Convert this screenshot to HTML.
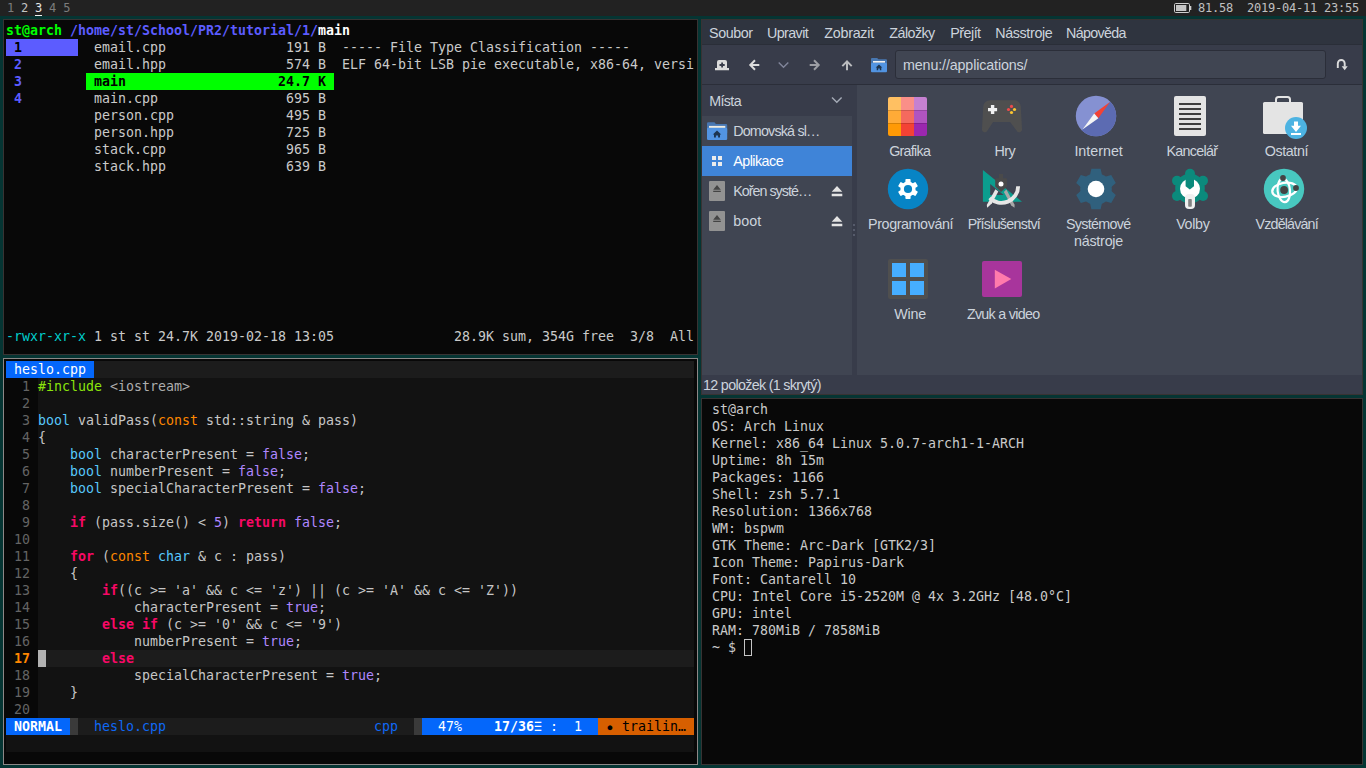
<!DOCTYPE html>
<html lang="cs"><head><meta charset="utf-8"><title>bspwm desktop</title>
<style>
html,body{margin:0;padding:0}
body{width:1366px;height:768px;overflow:hidden;background:#053533;position:relative;
 font-family:"DejaVu Sans Mono","Liberation Mono",monospace}
#bar{position:absolute;left:0;top:0;width:1366px;height:16px;background:#222222}
.bt{position:absolute;height:16px;line-height:16px;font-size:12px;letter-spacing:-0.224px;white-space:pre;color:#c0c0c0}
.d1{color:#7c7c7c}.d2{color:#c4c4c4}.d3{color:#e6e6e6}
.ab{position:absolute;display:block}
.bx{position:absolute;box-sizing:border-box}
.win{position:absolute;box-sizing:border-box;border:1px solid #383333;background:#080808}
.win.foc{border-color:#8c8787}
.ln{position:absolute;height:17px;line-height:17px;font-size:13.288px;letter-spacing:0.0133px;white-space:pre;color:#cacaca}
.ln.v{color:#c6c6c6}
.b{font-weight:bold}
.g{color:#00ff00}.bl{color:#5c5cff}.w{color:#ffffff}.k{color:#000000}.cy{color:#00cdcd}
.lnr{color:#646464}.cur{color:#ff8700}
.kw{color:#f70866}.ty{color:#58c8fc}.co{color:#ff8700}.nu{color:#af87ff}.inc{color:#8ae40c}.st{color:#adadad}
.sb{color:#0f68f5}
/* file manager */
#fm{position:absolute;left:701px;top:19px;width:662px;height:376px;box-sizing:border-box;border:1px solid #383333;background:#404552;overflow:hidden;
 font-family:"Liberation Sans","DejaVu Sans",sans-serif;font-size:14.3px;color:#ccd3dc}
#fm .a{position:absolute}
#fm .t{position:absolute;white-space:pre;line-height:17px;height:17px}
#fm .c{text-align:center}
.tri{display:inline-block;width:12px;margin-right:-4px;transform:scaleX(.68);transform-origin:0 50%}
.dot{display:inline-block;width:8px;transform:translateY(1px) scale(.6);transform-origin:50% 50%}
</style></head>
<body>
<div id="bar"></div>
<div class="bt" style="left:0;top:0"> <span class="d1">1</span> <span class="d2">2</span> <span class="d3">3</span> <span class="d1">4</span> <span class="d1">5</span></div>
<div class="bx" style="left:35px;top:15px;width:7px;height:1px;background:#f0f0f0"></div>
<svg class="ab" style="left:1173px;top:2px" width="20" height="12" viewBox="0 0 20 12"><rect x="1.5" y="1.5" width="15" height="9" rx="1.2" fill="none" stroke="#cfcfcf" stroke-width="1"/><rect x="17" y="4" width="1.3" height="4" fill="#cfcfcf"/><rect x="3" y="3" width="10.3" height="6" fill="#c4c4c4"/></svg>
<div class="bt" style="left:1198px;top:0">81.58  2019-04-11 23:55</div>
<div class="win" id="w1" style="left:3px;top:19px;width:695px;height:336px"></div>
<div class="win foc" id="w2" style="left:3px;top:358px;width:695px;height:407px"></div>
<div class="win" id="w4" style="left:701px;top:398px;width:662px;height:367px"></div>
<div id="ranger">
<div class="bx" style="left:6px;top:39px;width:72px;height:17px;background:#5c5cff"></div><div class="bx" style="left:86px;top:73px;width:248px;height:17px;background:#00ff00"></div>
<div class="ln" style="left:6px;top:22px"><span class="b g">st@arch</span><span class="b bl"> /home/st/School/PR2/tutorial/1/</span><span class="b w">main</span></div>
<div class="ln" style="left:6px;top:39px"><span class="b k"> 1        </span> email.cpp               191 B  ----- File Type Classification -----</div>
<div class="ln" style="left:6px;top:56px"><span class="b bl"> 2        </span> email.hpp               574 B  ELF 64-bit LSB pie executable, x86-64, versi</div>
<div class="ln" style="left:6px;top:73px"><span class="b bl"> 3        </span><span class="b k"> main                   24.7 K </span></div>
<div class="ln" style="left:6px;top:90px"><span class="b bl"> 4        </span> main.cpp                695 B </div>
<div class="ln" style="left:6px;top:107px">           person.cpp              495 B </div>
<div class="ln" style="left:6px;top:124px">           person.hpp              725 B </div>
<div class="ln" style="left:6px;top:141px">           stack.cpp               965 B </div>
<div class="ln" style="left:6px;top:158px">           stack.hpp               639 B </div>
<div class="ln" style="left:6px;top:328px"><span class="cy">-rwxr-xr-x</span> 1 st st 24.7K 2019-02-18 13:05               28.9K sum, 354G free  3/8  All</div>
</div>
<div id="vim">
<div class="bx" style="left:6px;top:361px;width:688px;height:17px;background:#1c1c1c"></div><div class="bx" style="left:6px;top:361px;width:88px;height:17px;background:#0467fb"></div><div class="bx" style="left:38px;top:378px;width:656px;height:340px;background:#121212"></div><div class="bx" style="left:46px;top:650px;width:648px;height:17px;background:#1c1c1c"></div><div class="bx" style="left:38px;top:650px;width:8px;height:17px;background:#b2b2b2"></div><div class="bx" style="left:6px;top:718px;width:688px;height:17px;background:#1c1c1c"></div><div class="bx" style="left:6px;top:718px;width:64px;height:17px;background:#0467fb"></div><div class="bx" style="left:70px;top:718px;width:8px;height:17px;background:#3a3a3a"></div><div class="bx" style="left:414px;top:718px;width:8px;height:17px;background:#3a3a3a"></div><div class="bx" style="left:422px;top:718px;width:176px;height:17px;background:#0467fb"></div><div class="bx" style="left:598px;top:718px;width:96px;height:17px;background:#d75f00"></div><div class="bx" style="left:6px;top:735px;width:688px;height:17px;background:#121212"></div>
<div class="ln" style="left:6px;top:361px"><span class="w"> heslo.cpp </span></div>
<div class="ln v" style="left:6px;top:378px"><span class="lnr">  1 </span><span class="inc">#include</span><span class="st"> &lt;iostream&gt;</span></div>
<div class="ln v" style="left:6px;top:395px"><span class="lnr">  2 </span></div>
<div class="ln v" style="left:6px;top:412px"><span class="lnr">  3 </span><span class="ty">bool</span> validPass(<span class="co">const</span> std::string &amp; pass)</div>
<div class="ln v" style="left:6px;top:429px"><span class="lnr">  4 </span>{</div>
<div class="ln v" style="left:6px;top:446px"><span class="lnr">  5 </span>    <span class="ty">bool</span> characterPresent = <span class="nu">false</span>;</div>
<div class="ln v" style="left:6px;top:463px"><span class="lnr">  6 </span>    <span class="ty">bool</span> numberPresent = <span class="nu">false</span>;</div>
<div class="ln v" style="left:6px;top:480px"><span class="lnr">  7 </span>    <span class="ty">bool</span> specialCharacterPresent = <span class="nu">false</span>;</div>
<div class="ln v" style="left:6px;top:497px"><span class="lnr">  8 </span></div>
<div class="ln v" style="left:6px;top:514px"><span class="lnr">  9 </span>    <span class="b kw">if</span> (pass.size() &lt; <span class="nu">5</span>) <span class="b kw">return</span> <span class="nu">false</span>;</div>
<div class="ln v" style="left:6px;top:531px"><span class="lnr"> 10 </span></div>
<div class="ln v" style="left:6px;top:548px"><span class="lnr"> 11 </span>    <span class="b kw">for</span> (<span class="co">const</span> <span class="ty">char</span> &amp; c : pass)</div>
<div class="ln v" style="left:6px;top:565px"><span class="lnr"> 12 </span>    {</div>
<div class="ln v" style="left:6px;top:582px"><span class="lnr"> 13 </span>        <span class="b kw">if</span>((c &gt;= 'a' &amp;&amp; c &lt;= 'z') || (c &gt;= 'A' &amp;&amp; c &lt;= 'Z'))</div>
<div class="ln v" style="left:6px;top:599px"><span class="lnr"> 14 </span>            characterPresent = <span class="nu">true</span>;</div>
<div class="ln v" style="left:6px;top:616px"><span class="lnr"> 15 </span>        <span class="b kw">else if</span> (c &gt;= '0' &amp;&amp; c &lt;= '9')</div>
<div class="ln v" style="left:6px;top:633px"><span class="lnr"> 16 </span>            numberPresent = <span class="nu">true</span>;</div>
<div class="ln v" style="left:6px;top:650px"><span class="b cur"> 17 </span>        <span class="b kw">else</span></div>
<div class="ln v" style="left:6px;top:667px"><span class="lnr"> 18 </span>            specialCharacterPresent = <span class="nu">true</span>;</div>
<div class="ln v" style="left:6px;top:684px"><span class="lnr"> 19 </span>    }</div>
<div class="ln v" style="left:6px;top:701px"><span class="lnr"> 20 </span></div>
<div class="ln" style="left:6px;top:718px"><span class="b w"> NORMAL </span> <span class="sb">  heslo.cpp</span>                          <span class="sb">cpp</span>   <span class="w">  47%    </span><span class="b w">17/36</span><span class="w tri">☰</span><span class="w"> :  1  </span><span class="k"> </span><span class="k dot">●</span><span class="k"> trailin… </span></div>
</div>
<div id="term">
<div class="ln" style="left:704px;top:401px"> st@arch</div>
<div class="ln" style="left:704px;top:418px"> OS: Arch Linux</div>
<div class="ln" style="left:704px;top:435px"> Kernel: x86_64 Linux 5.0.7-arch1-1-ARCH</div>
<div class="ln" style="left:704px;top:452px"> Uptime: 8h 15m</div>
<div class="ln" style="left:704px;top:469px"> Packages: 1166</div>
<div class="ln" style="left:704px;top:486px"> Shell: zsh 5.7.1</div>
<div class="ln" style="left:704px;top:503px"> Resolution: 1366x768</div>
<div class="ln" style="left:704px;top:520px"> WM: bspwm</div>
<div class="ln" style="left:704px;top:537px"> GTK Theme: Arc-Dark [GTK2/3]</div>
<div class="ln" style="left:704px;top:554px"> Icon Theme: Papirus-Dark</div>
<div class="ln" style="left:704px;top:571px"> Font: Cantarell 10</div>
<div class="ln" style="left:704px;top:588px"> CPU: Intel Core i5-2520M @ 4x 3.2GHz [48.0°C]</div>
<div class="ln" style="left:704px;top:605px"> GPU: intel</div>
<div class="ln" style="left:704px;top:622px"> RAM: 780MiB / 7858MiB</div>
<div class="ln" style="left:704px;top:639px"> ~ $ </div>
<div class="bx" style="left:744px;top:639px;width:8px;height:17px;border:1px solid #c6c6c6"></div>
</div>
<div id="fm">
<!-- menubar -->
<div class="a" style="left:0;top:0;width:660px;height:24px;background:#2f343f"></div>
<div class="a" style="left:0;top:24px;width:660px;height:1px;background:#2a2e38"></div>
<!-- toolbar -->
<div class="a" style="left:0;top:25px;width:660px;height:39px;background:#383c4a"></div>
<div class="a" style="left:0;top:64px;width:660px;height:1px;background:#2b2e39"></div>
<div class="a" style="left:193px;top:30px;width:431px;height:29px;box-sizing:border-box;border:1px solid #2b2e39;border-radius:3px;background:#404552"></div>
<!-- sidebar -->
<div class="a" style="left:0;top:65px;width:155px;height:290px;background:#383c4a"></div>
<div class="a" style="left:0;top:96px;width:150px;height:259px;background:#404552"></div>
<div class="a" style="left:0;top:126px;width:150px;height:30px;background:#3f84d8"></div>
<!-- statusbar -->
<div class="a" style="left:0;top:355px;width:660px;height:19px;background:#383c4a"></div>
<!-- labels -->
<div class="t" style="top:5px;letter-spacing:-0.400px;left:7.0px;">Soubor</div>
<div class="t" style="top:5px;letter-spacing:-0.600px;left:65.0px;">Upravit</div>
<div class="t" style="top:5px;letter-spacing:-0.257px;left:122.3px;">Zobrazit</div>
<div class="t" style="top:5px;letter-spacing:-0.550px;left:187.3px;">Záložky</div>
<div class="t" style="top:5px;letter-spacing:-0.520px;left:248.3px;">Přejít</div>
<div class="t" style="top:5px;letter-spacing:-0.350px;left:293.2px;">Násstroje</div>
<div class="t" style="top:5px;letter-spacing:-0.700px;left:364.1px;">Nápověda</div>
<div class="t" style="top:37px;letter-spacing:-0.137px;left:201.0px;">menu://applications/</div>
<div class="t" style="top:73px;letter-spacing:-0.625px;left:7.2px;">Místa</div>
<div class="t" style="top:103px;letter-spacing:-0.809px;left:31.2px;">Domovská sl…</div>
<div class="t" style="top:133px;letter-spacing:-0.514px;left:31.2px;color:#ffffff">Aplikace</div>
<div class="t" style="top:163px;letter-spacing:-0.982px;left:31.2px;">Kořen systé…</div>
<div class="t" style="top:193px;letter-spacing:0.067px;left:31.3px;">boot</div>
<div class="t" style="top:357px;letter-spacing:-0.675px;left:1.0px;">12 položek (1 skrytý)</div>
<div class="t c" style="top:123px;letter-spacing:-0.708px;left:137.7px;width:140px;">Grafika</div>
<div class="t c" style="top:123px;letter-spacing:-0.550px;left:232.9px;width:140px;">Hry</div>
<div class="t c" style="top:123px;letter-spacing:-0.014px;left:326.6px;width:140px;">Internet</div>
<div class="t c" style="top:123px;letter-spacing:-0.686px;left:419.9px;width:140px;">Kancelář</div>
<div class="t c" style="top:123px;letter-spacing:-0.375px;left:514.4px;width:140px;">Ostatní</div>
<div class="t c" style="top:196px;letter-spacing:-0.400px;left:138.6px;width:140px;">Programování</div>
<div class="t c" style="top:196px;letter-spacing:-0.725px;left:231.9px;width:140px;">Příslušenství</div>
<div class="t c" style="top:196px;letter-spacing:-0.688px;left:326.2px;width:140px;">Systémové</div>
<div class="t c" style="top:213px;letter-spacing:-0.214px;left:326.5px;width:140px;">nástroje</div>
<div class="t c" style="top:196px;letter-spacing:-0.300px;left:420.9px;width:140px;">Volby</div>
<div class="t c" style="top:196px;letter-spacing:-0.844px;left:514.7px;width:140px;">Vzdělávání</div>
<div class="t c" style="top:286px;letter-spacing:-0.267px;left:138.1px;width:140px;">Wine</div>
<div class="t c" style="top:286px;letter-spacing:-0.709px;left:231.2px;width:140px;">Zvuk a video</div>
<!-- all icons: coordinates are absolute screen px, shifted into the window -->
<svg class="a" style="left:0;top:0" width="660" height="374" viewBox="702 20 660 374">
<defs>
<clipPath id="cg"><rect x="888" y="97" width="39" height="39" rx="2"/></clipPath>
<clipPath id="ci"><circle cx="1096" cy="116" r="20.2"/></clipPath>
</defs>
<!-- toolbar icons -->
<g fill="#dcdcdc">
 <path d="M717 68V62a2 2 0 0 1 2-2h6a2 2 0 0 1 2 2v6h2v2.3h-14V68z"/>
 <path d="M721.2 62.4h1.8v1.7h1.7v1.8h-1.7v1.7h-1.8v-1.7h-1.7v-1.8h1.7z" fill="#383c4a"/>
 <path d="M754.3 59.6l1.4 1.4-3 3H759.3v2H752.7l3 3-1.4 1.4-5.4-5.4z"/>
 <path d="M779.2 61.9l4.3 4.4 4.3-4.4 1 1-5.3 5.4-5.3-5.4z" fill="#80859a"/>
 <path d="M814.7 59.6l-1.4 1.4 3 3H809.7v2H816.3l-3 3 1.4 1.4 5.4-5.4z" opacity="0.62"/>
 <path d="M841.6 65.4l1.4 1.4 3-3V70.3h2V63.8l3 3 1.4-1.4-5.4-5.4z" opacity="0.8"/>
 <path d="M1337.8 68V63.4A3.45 3.45 0 0 1 1344.7 63.4V66.6" fill="none" stroke="#dcdcdc" stroke-width="1.9"/><path d="M1341.7 66.2h6l-3 4z"/>
</g>
<!-- home folder (toolbar) -->
<g>
 <path d="M871 59a1 1 0 0 1 1-1h5.2l1.2 1.3H886a1 1 0 0 1 1 1V66h-16z" fill="#4877b1"/>
 <rect x="873" y="61" width="12" height="1.6" fill="#f2f2f2"/>
 <rect x="871" y="63" width="16" height="9.2" rx="1" fill="#5294e2"/>
 <path d="M879 64.6l3.3 3h-1v2.6h-1.5v-1.7h-1.6v1.7h-1.5v-2.6h-1z" fill="#1d344f"/>
</g>
<!-- sidebar icons -->
<path d="M832.5 96.9l4.3 4.4 4.3-4.4 1 1-5.3 5.4-5.3-5.4z" fill="#a4aab6"/>
<g>
 <path d="M707 123.5a1.2 1.2 0 0 1 1.2-1.2h6.2l1.5 1.6H726a1.2 1.2 0 0 1 1.2 1.2V133h-20.2z" fill="#4877b1"/>
 <rect x="709" y="125.9" width="16.3" height="2.4" fill="#f1ecdf"/>
 <rect x="707" y="127.8" width="20.2" height="12.1" rx="1.2" fill="#5294e2"/>
 <path d="M717 130.6l4.2 3.8h-1.2v3.2h-1.9v-2.1h-2.2v2.1h-1.9v-3.2h-1.2z" fill="#1d344f"/>
</g>
<g fill="#ececec">
 <rect x="712" y="156" width="4" height="4"/><rect x="718" y="156" width="4" height="4"/>
 <rect x="712" y="162" width="4" height="4"/><rect x="718" y="162" width="4" height="4"/>
</g>
<g>
 <rect x="709" y="181" width="16" height="20" rx="1" fill="#929292"/>
 <path d="M717 185.1l3.8 4.6h-7.6zM713.2 190.8h7.6v1.2h-7.6z" fill="#444444"/>
 <rect x="709" y="211" width="16" height="20" rx="1" fill="#929292"/>
 <path d="M717 215.1l3.8 4.6h-7.6zM713.2 220.8h7.6v1.2h-7.6z" fill="#444444"/>
</g>
<g fill="#e4e4e4">
 <path d="M837 186l5.3 5.8h-10.6zM831.7 193.8h10.6v2.5h-10.6z"/>
 <path d="M837 216l5.3 5.8h-10.6zM831.7 223.8h10.6v2.5h-10.6z"/>
</g>
<g fill="#565b6b">
 <rect x="853" y="224" width="2" height="2"/><rect x="853" y="229" width="2" height="2"/><rect x="853" y="234" width="2" height="2"/>
</g>
<!-- Grafika -->
<g clip-path="url(#cg)">
 <rect x="888" y="97" width="13" height="13" fill="#ffc062"/><rect x="901" y="97" width="13" height="13" fill="#fa8f88"/><rect x="914" y="97" width="13" height="13" fill="#c681d1"/>
 <rect x="888" y="110" width="13" height="13" fill="#ffab37"/><rect x="901" y="110" width="13" height="13" fill="#f46a5e"/><rect x="914" y="110" width="13" height="13" fill="#b054c0"/>
 <rect x="888" y="123" width="13" height="13" fill="#ff9a05"/><rect x="901" y="123" width="13" height="13" fill="#f34235"/><rect x="914" y="123" width="13" height="13" fill="#9b27af"/>
 <rect x="888" y="110" width="39" height="0.8" fill="#000" opacity="0.2"/><rect x="888" y="123" width="39" height="0.8" fill="#000" opacity="0.2"/>
</g>
<!-- Hry -->
<path d="M990.5 100.2H1014.5A6.4 6.5 0 0 1 1020.8 106.7L1022 128.9A2.85 2.9 0 0 1 1016.7 130.8L1010.1 122.1H993.1L987.3 130.8A2.85 2.9 0 0 1 982 128.9L983.2 106.7A7.3 6.5 0 0 1 990.5 100.2Z" fill="#4f4f4f"/>
<path d="M990.9 105h3.4v2.9h2.8v3.4h-2.8v2.8h-3.4v-2.8h-2.9v-3.4h2.9z" fill="#f0f0f0"/>
<circle cx="1011.5" cy="106.4" r="1.6" fill="#ef4b4b"/><circle cx="1008.5" cy="109.5" r="1.6" fill="#ef4b4b"/>
<circle cx="1014.5" cy="109.5" r="1.6" fill="#fbc531"/><circle cx="1011.5" cy="112.5" r="1.6" fill="#fbc531"/>
<!-- Internet -->
<g clip-path="url(#ci)">
 <rect x="1075" y="95" width="42" height="42" fill="#8591d2"/>
 <path d="M1082.5 129.6L1109.9 101.9L1118 101V138H1076z" fill="#5c6bb2"/>
</g>
<path d="M1109.9 101.9L1094.2 113.6L1098.4 118.2z" fill="#f34235"/>
<path d="M1082.5 129.6L1094.2 113.6L1098.4 118.2z" fill="#f5f5f5"/>
<!-- Kancelar -->
<rect x="1174" y="96" width="32" height="40" rx="2" fill="#e4e4e4"/>
<g fill="#3f3f3f">
 <rect x="1179" y="103" width="22" height="2"/><rect x="1179" y="108" width="22" height="2"/><rect x="1179" y="113" width="22" height="2"/>
 <rect x="1179" y="118" width="22" height="2"/><rect x="1179" y="123" width="22" height="2"/><rect x="1179" y="128" width="22" height="2"/>
</g>
<!-- Ostatni -->
<path d="M1276 102.5v-3a2.5 2.5 0 0 1 2.5-2.5h9a2.5 2.5 0 0 1 2.5 2.5v3" fill="none" stroke="#e4e4e4" stroke-width="2"/>
<rect x="1263" y="102" width="40" height="32" rx="1.5" fill="#e4e4e4"/>
<circle cx="1296" cy="128" r="11" fill="#4db3e2"/>
<path d="M1294 121.5h4v4.3h3l-5 6.1-5-6.1h3zM1291 133h10v2h-10z" fill="#ffffff"/>
<!-- Programovani -->
<circle cx="908" cy="189" r="20.2" fill="#0784c5"/>
<g transform="translate(908 189)" fill="#ffffff">
 <circle r="7.6"/>
 <rect x="-2.6" y="-10" width="5.2" height="20" rx="0.8"/>
 <rect x="-2.6" y="-10" width="5.2" height="20" rx="0.8" transform="rotate(60)"/><rect x="-2.6" y="-10" width="5.2" height="20" rx="0.8" transform="rotate(120)"/>
 <circle r="4.1" fill="#0784c5"/>
</g>
<!-- Prislusenstvi -->
<path d="M982.9 169.9V201.7H1022zM990.2 184L1003.7 195H990.2z" fill="#0b9d8e" fill-rule="evenodd"/>
<path d="M1003.9 191.9L1006.4 189.5L1014.6 204.8L1014.5 207.8L1011.3 205.4z" fill="#a8a8a8"/>
<path d="M1020.1 186.2A18.6 18.6 0 0 1 988.35 199.35L991.1 196.6A14.7 14.7 0 0 0 1016.2 186.2z" fill="#e6e6e6"/>
<path d="M995.4 189.2L998.3 191.4L992 203.2L987.2 207.8L986.8 205.1z" fill="#e6e6e6"/>
<path d="M999 174h4v4.2h3a1 1 0 0 1 1 1v7.2L1001 192L995.2 186.4v-7.2a1 1 0 0 1 1-1H999z" fill="#4a4a4a"/>
<circle cx="1001" cy="183.9" r="2.5" fill="#ffffff"/>
<!-- Systemove nastroje -->
<g transform="translate(1096 189)" fill="#30607d">
 <circle r="15.8"/>
 <path d="M-4.6-20.2h9.2l1.6 7h-12.4zM-4.6 20.2h9.2l1.6-7h-12.4z"/>
 <path d="M-4.6-20.2h9.2l1.6 7h-12.4zM-4.6 20.2h9.2l1.6-7h-12.4z" transform="rotate(60)"/><path d="M-4.6-20.2h9.2l1.6 7h-12.4zM-4.6 20.2h9.2l1.6-7h-12.4z" transform="rotate(120)"/>
 <circle r="8.3" fill="#ffffff"/>
</g>
<!-- Volby -->
<g fill="#0b8a7c">
 <circle cx="1190" cy="188.5" r="14.8"/>
 <circle cx="1190" cy="173.8" r="5"/><circle cx="1203" cy="180.8" r="5"/><circle cx="1203" cy="196" r="5"/>
 <circle cx="1177" cy="180.8" r="5"/><circle cx="1177" cy="196" r="5"/>
</g>
<circle cx="1190" cy="188.8" r="10" fill="#ffffff"/>
<rect x="1185" y="194" width="10" height="15" rx="4" fill="#f0f0f0"/>
<rect x="1188.2" y="199" width="3.6" height="7.8" rx="0.8" fill="#838383"/>
<path d="M1185.6 176h8.4v10.2l-4.2 3.4-4.2-3.4z" fill="#0b8a7c"/>
<!-- Vzdelavani -->
<circle cx="1284" cy="189" r="20.2" fill="#48c8c0"/>
<g fill="none" stroke="#ffffff" stroke-width="2.2">
 <ellipse cx="1284.5" cy="189.8" rx="12.4" ry="7" transform="rotate(-10 1284.5 189.8)"/>
 <ellipse cx="1283.8" cy="190.4" rx="6.2" ry="11.8" transform="rotate(-6 1283.8 190.4)"/>
</g>
<circle cx="1284.1" cy="190" r="3.9" fill="#444444"/>
<circle cx="1283" cy="178" r="2.9" fill="#444444"/>
<circle cx="1296" cy="188" r="2.9" fill="#444444"/>
<!-- Wine -->
<rect x="888" y="259" width="40" height="40" rx="2" fill="#4f4f4f"/>
<g fill="#46aeff">
 <rect x="892" y="263" width="14" height="14"/><rect x="910" y="263" width="14" height="14"/>
 <rect x="892" y="281" width="14" height="14"/><rect x="910" y="281" width="14" height="14"/>
</g>
<!-- Zvuk a video -->
<rect x="982" y="261" width="40" height="36" rx="2" fill="#a8359c"/>
<path d="M994.8 269.8V288.4L1011.3 279z" fill="#ff7bac"/>
</svg>
</div>
</body></html>
